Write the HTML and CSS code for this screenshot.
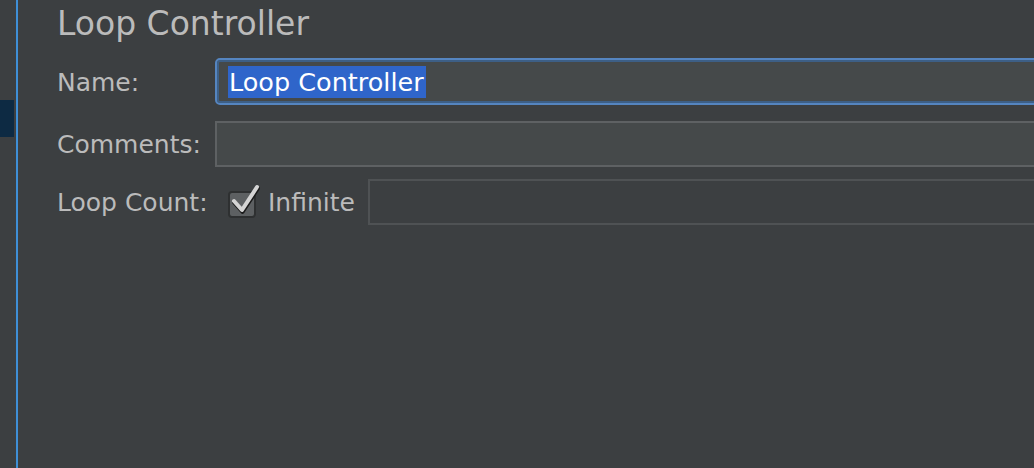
FILE: index.html
```html
<!DOCTYPE html>
<html>
<head>
<meta charset="utf-8">
<link rel="stylesheet" href="styles.css">
</head>
<body>
<div class="app">
  <aside class="sidebar"><div class="sel"></div></aside>
  <div class="divider"></div>
  <main class="panel">
    <h1 class="title">Loop Controller</h1>
    <div class="form">
      <div class="row row-name">
        <label class="label">Name:</label>
        <div class="field focused"><span class="selected">Loop Controller</span></div>
      </div>
      <div class="row row-comments">
        <label class="label">Comments:</label>
        <div class="field"></div>
      </div>
      <div class="row row-loop">
        <label class="label">Loop Count:</label>
        <div class="loop">
          <span class="check">
            <svg width="32" height="34" viewBox="0 0 32 34">
              <path d="M5 19 L13 28 L28 5" fill="none" stroke="#1a1a1a" stroke-width="4.5" stroke-linecap="round" stroke-linejoin="round" transform="translate(0.5 1.5)"/>
              <path d="M5 19 L13 28 L28 5" fill="none" stroke="#d4d4d4" stroke-width="4" stroke-linecap="round" stroke-linejoin="round"/>
            </svg>
          </span>
          <span class="infinite">Infinite</span>
          <div class="field disabled"></div>
        </div>
      </div>
    </div>
  </main>
</div>
</body>
</html>
```
FILE: styles.css
```css
html, body {
  margin: 0;
  padding: 0;
  background: #3c3f41;
  height: 100%;
  overflow: hidden;
}
.app {
  display: flex;
  height: 468px;
  font-family: "DejaVu Sans", sans-serif;
  color: #bbbbbb;
}
.sidebar {
  width: 16px;
  flex: none;
  padding-top: 100px;
  box-sizing: border-box;
}
.sel {
  width: 14px;
  height: 37px;
  background: #0d2a43;
}
.divider {
  width: 2px;
  flex: none;
  background: #3f8fd6;
}
.panel {
  flex: 1;
  overflow: hidden;
  padding-left: 39px;
}
.title {
  margin: 0;
  padding-top: 4px;
  height: 58px;
  box-sizing: border-box;
  font-size: 33px;
  line-height: 40px;
  font-weight: normal;
  color: #bbbbbb;
}
.form {
  display: flex;
  flex-direction: column;
  margin-right: -30px;
  font-size: 25px;
}
.row {
  display: grid;
  grid-template-columns: 158px 1fr;
  align-items: center;
  height: 46px;
}
.row-name {
  height: 47px;
  margin-bottom: 16px;
}
.row-comments {
  margin-bottom: 12px;
}
.label {
  line-height: 30px;
  padding-top: 2px;
}
.field {
  height: 46px;
  box-sizing: border-box;
  border: 2px solid #5e6163;
  background: #45494a;
}
.field.focused {
  height: 47px;
  border: 2px solid #5585c0;
  border-radius: 5px;
  box-shadow: inset 0 0 0 2px #3d5f86;
  padding: 6px 0 0 11px;
}
.selected {
  display: inline-block;
  background: #2f65ca;
  color: #ffffff;
  font-size: 25.5px;
  height: 32px;
  line-height: 32px;
  padding: 0 2px 0 1px;
}
.field.disabled {
  flex: 1;
  background: transparent;
  border-color: #4f5254;
}
.loop {
  display: flex;
  align-items: center;
  height: 46px;
}
.check {
  position: relative;
  width: 28px;
  height: 27px;
  margin-left: 13px;
  margin-right: 12px;
  box-sizing: border-box;
  border: 2px solid #2e3031;
  border-radius: 4px;
  background: #5d6062;
  margin-top: 5px;
}
.check svg {
  position: absolute;
  left: -1px;
  top: -11px;
}
.infinite {
  margin-right: 13px;
  line-height: 30px;
  padding-top: 2px;
}
```
